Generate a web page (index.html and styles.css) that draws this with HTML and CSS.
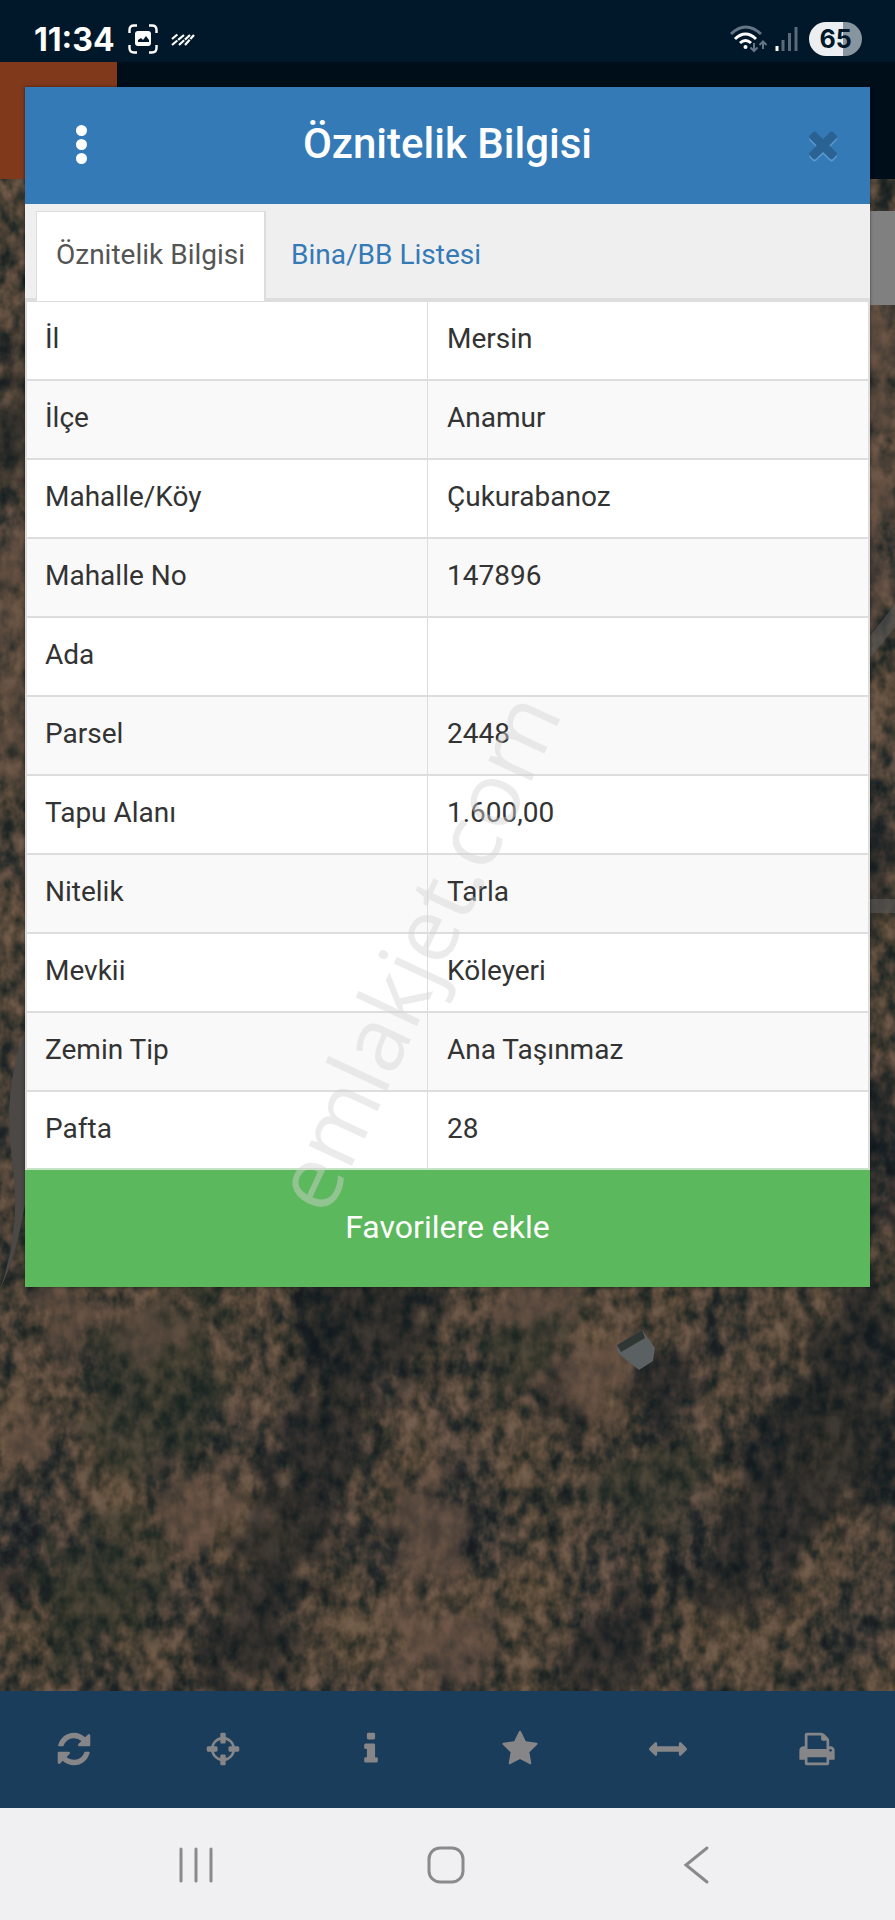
FILE: index.html
```html
<!DOCTYPE html>
<html lang="tr">
<head>
  <meta charset="UTF-8">
  <meta name="viewport" content="width=device-width, initial-scale=1.0">
  <title>Öznitelik Bilgisi</title>
  <link rel="stylesheet" href="styles.css">
</head>
<body>
  <div class="status-bar">
    <div class="status-left">
      <span class="clock">11:34</span>
      <svg class="icon-capture" viewBox="0 0 30 30">
        <path d="M1.500 9V6q0-4.500 4.500-4.500H9M21 1.500h3q4.500 0 4.500 4.500v3M28.500 21v3q0 4.500-4.500 4.500h-3M9 28.500H6q-4.500 0-4.500-4.500v-3" fill="none" stroke="#fff" stroke-width="2.400"/>
        <rect x="7" y="7" width="16" height="15" rx="3" fill="#fff"/>
        <path d="M10 18v-2l3-2 2 2 3-4 3 4v2z" fill="#01172a"/>
      </svg>
      <svg class="icon-stripes" viewBox="0 0 26 15">
        <path d="M2 7l6-5M2 13L14 3M9 13L20 3M15 13L24 3" stroke="#fff" stroke-width="2.200" stroke-dasharray="7 1 9" fill="none"/>
      </svg>
    </div>
    <div class="status-right">
      <svg class="icon-wifi" viewBox="0 0 38 28">
        <g fill="none" stroke-width="3">
          <path d="M1 9q14.500-14 30 0" stroke="#667585"/>
          <path d="M5 14q10.500-10 21 0M10 18q5.500-5 11 0" stroke="#fff"/>
          <path d="M24 18v8M20.500 22.500L24 26l3.500-3.500M33 24v-7M29.500 20l3.500-3.500 3.500 3.500" stroke="#667585" stroke-width="2"/>
        </g>
        <circle cx="15.500" cy="22" r="2" fill="#fff"/>
      </svg>
      <svg class="icon-signal" viewBox="0 0 23 25">
        <path d="M2 19v5" stroke="#fff" stroke-width="3"/>
        <path d="M8 13v11M14.500 6v18M21 0v24" stroke="#5c6b7a" stroke-width="3"/>
      </svg>
      <span class="battery">65</span>
    </div>
  </div>

  <main class="app">
    <div class="app-header">
      <div class="app-logo"></div>
    </div>

    <div class="map">
      <svg class="map-image" viewBox="0 0 895 1512" preserveAspectRatio="xMidYMid slice">
        <defs>
          <filter id="trees" x="0" y="0" width="100%" height="100%" color-interpolation-filters="sRGB">
            <feTurbulence type="fractalNoise" baseFrequency="0.075 0.055" numOctaves="3" seed="12"/>
            <feColorMatrix values="1 0 0 0 0  1 0 0 0 0  1 0 0 0 0  0 0 0 0 1" result="fine"/>
            <feTurbulence type="fractalNoise" baseFrequency="0.014 0.010" numOctaves="3" seed="7"/>
            <feColorMatrix values="1 0 0 0 0  1 0 0 0 0  0.8 0.2 0 0 0  0 0 0 0 1" result="coarse"/>
            <feComposite in="fine" in2="coarse" operator="arithmetic" k1="0" k2="0.850" k3="0.550" k4="-0.180"/>
            <feComponentTransfer>
              <feFuncR type="table" tableValues="0.10 0.10 0.12 0.18 0.27 0.35 0.42 0.45 0.46"/>
              <feFuncG type="table" tableValues="0.11 0.11 0.14 0.19 0.24 0.29 0.34 0.37 0.38"/>
              <feFuncB type="table" tableValues="0.12 0.12 0.14 0.17 0.20 0.24 0.28 0.31 0.32"/>
            </feComponentTransfer>
          </filter>
          <filter id="rough" x="-20%" y="-20%" width="140%" height="140%">
            <feTurbulence type="fractalNoise" baseFrequency="0.04" numOctaves="4" seed="4" result="n"/>
            <feDisplacementMap in="SourceGraphic" in2="n" scale="110" xChannelSelector="R" yChannelSelector="G"/>
            <feGaussianBlur stdDeviation="4"/>
          </filter>
        </defs>
        <rect width="895" height="1512" filter="url(#trees)"/>
        <!-- forest -->
        <g filter="url(#rough)" fill="#0c161a" opacity="0.500">
          <path d="M300 1080L440 1090 420 1180 370 1250 330 1390 250 1420 200 1500 175 1500 250 1340 300 1220z"/>
          <path d="M900 1090L840 1110 790 1200 730 1300 690 1440 760 1430 810 1360 900 1310z"/>
          <path d="M650 1160L700 1180 670 1260 640 1240zM545 1200L590 1220 580 1260 550 1250z"/>
          <path d="M220 1400L300 1420 290 1500 200 1500zM580 1440L650 1400 640 1512 560 1512z"/>
          <path d="M0 150H30V320H0zM0 1360L30 1370 20 1430 0 1440z"/>
          <path d="M865 620H895V760H865zM865 880H895V1060H865z"/>
        </g>
        <g filter="url(#rough)" fill="#1f2c22" opacity="0.400">
          <path d="M100 1150L210 1120 230 1240 130 1310 80 1250z"/>
          <path d="M480 1160L590 1110 560 1180 500 1230z"/>
          <path d="M600 1290L700 1260 690 1350 590 1330z"/>
          <path d="M40 1370L140 1330 160 1420 60 1500z"/>
        </g>
        <!-- bare soil -->
        <g filter="url(#rough)" fill="#6d5546" opacity="0.600">
          <path d="M480 1090L600 1090 560 1130 510 1155z"/>
          <path d="M550 1170L620 1150 650 1200 620 1230 540 1215z"/>
          <path d="M390 1290L440 1290 470 1360 450 1410 390 1380z"/>
          <path d="M400 1420L480 1440 500 1480 450 1512 390 1490z"/>
          <path d="M120 1140L180 1130 170 1180 130 1190zM40 1110L90 1110 80 1180 50 1170z"/>
          <path d="M5 1240L50 1230 30 1300 5 1300zM170 1290L240 1280 210 1370 170 1370z"/>
          <path d="M860 40H895V440H860zM0 350H26V600H0z"/>
        </g>
        <path d="M0 1110Q22 1050 12 980T26 850V1020Q16 1080 0 1110z" fill="#4b4845"/>
        <path d="M868 460L895 425V448L868 482zM868 720H895V734H868z" fill="#5a5856" opacity="0.600"/>
        <!-- house -->
        <path d="M617 1166l25-15 13 18-2 13-14 9-21-17z" fill="#5b6062"/>
        <path d="M617 1166l25-15 3 8-24 14z" fill="#303634"/>
      </svg>
      <div class="map-control"></div>
    </div>

    <section class="dialog" role="dialog" aria-labelledby="dialog-title">
      <header class="dialog-header">
        <button class="menu-btn" type="button" aria-label="Menü"><i></i><i></i><i></i></button>
        <h1 class="dialog-title" id="dialog-title">Öznitelik Bilgisi</h1>
        <button class="close-btn" type="button" aria-label="Kapat">
          <svg viewBox="0 0 1792 1792"><path d="M1490 1322q0 40-28 68l-136 136q-28 28-68 28t-68-28l-294-294-294 294q-28 28-68 28t-68-28l-136-136q-28-28-28-68t28-68l294-294-294-294q-28-28-28-68t28-68l136-136q28-28 68-28t68 28l294 294 294-294q28-28 68-28t68 28l136 136q28 28 28 68t-28 68l-294 294 294 294q28 28 28 68z"/></svg>
        </button>
      </header>

      <nav class="tabs">
        <a class="tab active" href="#oznitelik">Öznitelik Bilgisi</a>
        <a class="tab" href="#bina">Bina/BB Listesi</a>
      </nav>

      <table class="info-table" id="oznitelik">
        <tbody>
          <tr><th scope="row">İl</th><td>Mersin</td></tr>
          <tr><th scope="row">İlçe</th><td>Anamur</td></tr>
          <tr><th scope="row">Mahalle/Köy</th><td>Çukurabanoz</td></tr>
          <tr><th scope="row">Mahalle No</th><td>147896</td></tr>
          <tr><th scope="row">Ada</th><td></td></tr>
          <tr><th scope="row">Parsel</th><td>2448</td></tr>
          <tr><th scope="row">Tapu Alanı</th><td>1.600,00</td></tr>
          <tr><th scope="row">Nitelik</th><td>Tarla</td></tr>
          <tr><th scope="row">Mevkii</th><td>Köleyeri</td></tr>
          <tr><th scope="row">Zemin Tip</th><td>Ana Taşınmaz</td></tr>
          <tr><th scope="row">Pafta</th><td>28</td></tr>
        </tbody>
      </table>

      <button class="favorite-btn" type="button">Favorilere ekle</button>
      <div class="watermark">emlakjet.com</div>
    </section>
  </main>

  <div class="toolbar">
    <button type="button" aria-label="Yenile"><svg viewBox="0 0 1792 1792"><path d="M1639 1056q0 5-1 7-64 268-268 434.500t-478 166.500q-146 0-282.500-55t-243.500-157l-129 129q-19 19-45 19t-45-19-19-45v-448q0-26 19-45t45-19h448q26 0 45 19t19 45-19 45l-137 137q71 66 161 102t187 36q134 0 250-65t186-179q11-17 53-117 8-23 30-23h192q13 0 22.500 9.500t9.500 22.500zm25-800v448q0 26-19 45t-45 19h-448q-26 0-45-19t-19-45 19-45l138-138q-148-137-349-137-134 0-250 65t-186 179q-11 17-53 117-8 23-30 23h-199q-13 0-22.500-9.500t-9.500-22.500v-7q65-268 270-434.500t480-166.500q146 0 284 55.500t245 156.500l130-129q19-19 45-19t45 19 19 45z"/></svg></button>
    <button type="button" aria-label="Konum"><svg viewBox="0 0 1792 1792"><path d="M1325 1024h-109q-26 0-45-19t-19-45v-128q0-26 19-45t45-19h109q-32-108-112.500-188.500t-188.500-112.500v109q0 26-19 45t-45 19h-128q-26 0-45-19t-19-45v-109q-108 32-188.500 112.500t-112.500 188.500h109q26 0 45 19t19 45v128q0 26-19 45t-45 19h-109q32 108 112.500 188.500t188.500 112.500v-109q0-26 19-45t45-19h128q26 0 45 19t19 45v109q108-32 188.500-112.500t112.500-188.500zm339-192v128q0 26-19 45t-45 19h-143q-37 161-154.500 278.500t-278.500 154.500v143q0 26-19 45t-45 19h-128q-26 0-45-19t-19-45v-143q-161-37-278.500-154.500t-154.500-278.500h-143q-26 0-45-19t-19-45v-128q0-26 19-45t45-19h143q37-161 154.500-278.500t278.500-154.500v-143q0-26 19-45t45-19h128q26 0 45 19t19 45v143q161 37 278.500 154.500t154.500 278.500h143q26 0 45 19t19 45z"/></svg></button>
    <button type="button" aria-label="Bilgi"><svg viewBox="0 0 1792 1792"><path d="M1216 1344v128q0 26-19 45t-45 19h-512q-26 0-45-19t-19-45v-128q0-26 19-45t45-19h64v-384h-64q-26 0-45-19t-19-45v-128q0-26 19-45t45-19h384q26 0 45 19t19 45v576h64q26 0 45 19t19 45zm-128-1152v192q0 26-19 45t-45 19h-256q-26 0-45-19t-19-45v-192q0-26 19-45t45-19h256q26 0 45 19t19 45z"/></svg></button>
    <button type="button" aria-label="Favoriler"><svg viewBox="0 0 1792 1792"><path d="M1728 647q0 22-26 48l-363 354 86 500q1 7 1 20 0 21-10.500 35.500t-30.500 14.500q-19 0-40-12l-449-236-449 236q-22 12-40 12-21 0-31.500-14.500t-10.500-35.500q0-6 2-20l86-500-364-354q-25-27-25-48 0-37 56-46l502-73 225-455q19-41 49-41t49 41l225 455 502 73q56 9 56 46z"/></svg></button>
    <button type="button" aria-label="Ölçüm"><svg viewBox="0 0 1792 1792"><path d="M1792 896q0 26-19 45l-256 256q-19 19-45 19t-45-19-19-45v-128h-1024v128q0 26-19 45t-45 19-45-19l-256-256q-19-19-19-45t19-45l256-256q19-19 45-19t45 19 19 45v128h1024v-128q0-26 19-45t45-19 45 19l256 256q19 19 19 45z"/></svg></button>
    <button type="button" aria-label="Yazdır"><svg viewBox="0 0 1792 1792"><path d="M448 1536h896v-256h-896v256zm0-640h896v-384h-160q-40 0-68-28t-28-68v-160h-640v640zm1152 64q0-26-19-45t-45-19-45 19-19 45 19 45 45 19 45-19 19-45zm128 0v416q0 13-9.500 22.500t-22.500 9.500h-224v160q0 40-28 68t-68 28h-960q-40 0-68-28t-28-68v-160h-224q-13 0-22.500-9.500t-9.500-22.500v-416q0-79 56.500-135.500t135.500-56.500h64v-544q0-40 28-68t68-28h672q40 0 88 20t76 48l152 152q28 28 48 76t20 88v256h64q79 0 135.500 56.500t56.500 135.500z"/></svg></button>
  </div>

  <div class="nav-bar">
    <button type="button" aria-label="Son uygulamalar"><svg viewBox="0 0 40 40"><path d="M5 4v32M20 4v32M35 4v32"/></svg></button>
    <button type="button" aria-label="Ana ekran"><svg viewBox="0 0 40 40"><rect x="3" y="3" width="34" height="34" rx="11"/></svg></button>
    <button type="button" aria-label="Geri"><svg viewBox="0 0 40 40"><path d="M31 3L10 20l21 17"/></svg></button>
  </div>
</body>
</html>
```

FILE: styles.css
```css
* {
  box-sizing: border-box;
}
body {
  margin: 0;
  min-height: 100vh;
  display: flex;
  flex-direction: column;
  font-family: Roboto, "Liberation Sans", sans-serif;
  font-size: 28px;
  color: #333;
  background-color: #f0f0f2;
}
button {
  font: inherit;
  border: none;
  padding: 0;
  background: none;
  cursor: pointer;
}

/* Status bar */
.status-bar {
  height: 62px;
  padding: 16px 33px 0 34px;
  display: flex;
  justify-content: space-between;
  align-items: flex-start;
  background-color: #01172a;
  color: #fff;
  font-family: Inter, Roboto, sans-serif;
  font-weight: 700;
}
.status-left,
.status-right {
  display: flex;
  align-items: center;
  height: 46px;
}
.clock {
  font-size: 32px;
  margin-right: 13px;
}
.icon-capture {
  width: 30px;
  height: 30px;
  margin-right: 12px;
}
.icon-stripes {
  width: 26px;
  height: 15px;
}
.icon-wifi {
  width: 38px;
  height: 28px;
  margin-right: 7px;
}
.icon-signal {
  width: 23px;
  height: 25px;
  margin-right: 11px;
}
.battery {
  width: 53px;
  height: 34px;
  border-radius: 17px;
  background: linear-gradient(to right, #ebeff1 65%, #87959f 65%);
  color: #01172a;
  font-size: 25px;
  line-height: 34px;
  text-align: center;
}

/* Map page */
.app {
  position: relative;
  flex: 1;
  display: flex;
  flex-direction: column;
  min-height: 1260px;
}
.app-header {
  height: 117px;
  background-color: #000e1a;
}
.app-logo {
  width: 117px;
  height: 100%;
  background-color: #81391b;
}
.map {
  position: relative;
  flex: 1;
  overflow: hidden;
  background-color: #3a332c;
}
.map-image {
  position: absolute;
  width: 100%;
  height: 100%;
}
.map-control {
  position: absolute;
  top: 32px;
  right: 0;
  width: 94px;
  height: 94px;
  background-color: #808080;
}

/* Dialog */
.dialog {
  position: absolute;
  top: 25px;
  left: 25px;
  right: 25px;
  overflow: hidden;
  background-color: #fff;
  box-shadow: 0 0 3px rgba(0, 0, 0, 0.5);
}
.dialog-header {
  height: 117px;
  padding: 0 26px 3px 35px;
  display: flex;
  align-items: center;
  background-color: #337ab7;
}
.dialog-title {
  flex: 1;
  margin: 0;
  padding-right: 9px;
  font-size: 42px;
  font-weight: 500;
  line-height: 48px;
  text-align: center;
  color: #fff;
}
.menu-btn {
  width: 42px;
  display: flex;
  flex-direction: column;
  align-items: center;
  gap: 3px;
}
.menu-btn i {
  width: 11px;
  height: 11px;
  border-radius: 50%;
  background-color: #fff;
}
.close-btn svg {
  display: block;
  width: 42px;
  height: 42px;
  fill: #2a6293;
  filter: drop-shadow(0 2px 0 #5b9bd1);
}

.tabs {
  display: flex;
  height: 98px;
  padding: 7px 11px 0;
  background-color: #efefef;
  box-shadow: inset 0 -4px 0 #ddd;
}
.tab {
  padding: 25px 25px 0;
  line-height: 37px;
  color: #337ab7;
  text-decoration: none;
}
.tab.active {
  padding: 24px 19px 0;
  border: 1px solid #ddd;
  border-right-width: 2px;
  background-color: #fff;
  color: #555;
}

.info-table {
  width: 100%;
  table-layout: fixed;
  border-collapse: separate;
  border-spacing: 0;
  border: solid #ddd;
  border-width: 0 2px;
}
.info-table th,
.info-table td {
  height: 79px;
  padding: 18px 19px 22px;
  border-bottom: 2px solid #ddd;
  font-weight: 400;
  line-height: 37px;
  text-align: left;
}
.info-table th {
  width: 401px;
  padding-left: 18px;
  border-right: 1px solid #ddd;
}
.info-table tr:nth-child(even) {
  background-color: #f9f9f9;
}
.info-table tr:last-child > * {
  height: 78px;
  padding-bottom: 21px;
  border-bottom-color: #c5e3c5;
}
.favorite-btn {
  display: block;
  width: 100%;
  height: 117px;
  padding-bottom: 3px;
  background-color: #5cb85c;
  color: #fff;
  font-size: 32px;
}
.watermark {
  position: absolute;
  top: 72%;
  left: 46%;
  transform: translate(-50%, -50%) rotate(-65deg);
  font-family: "Open Sans", sans-serif;
  font-size: 89px;
  font-weight: 500;
  line-height: 1;
  color: rgba(210, 210, 210, 0.45);
  pointer-events: none;
}

/* Bottom bars */
.toolbar {
  height: 117px;
  padding: 6px 4px 0 0;
  display: grid;
  grid-template-columns: repeat(6, 1fr);
  background-color: #1a3d5c;
}
.toolbar svg {
  width: 38px;
  height: 38px;
  fill: #868688;
}
.nav-bar {
  height: 112px;
  padding: 8px 3px 0 0;
  display: flex;
  justify-content: center;
  background-color: #f0f0f2;
}
.nav-bar button {
  width: 28%;
}
.nav-bar svg {
  width: 40px;
  height: 40px;
  fill: none;
  stroke: #8a8a8c;
  stroke-width: 3;
  stroke-linecap: round;
}
```
